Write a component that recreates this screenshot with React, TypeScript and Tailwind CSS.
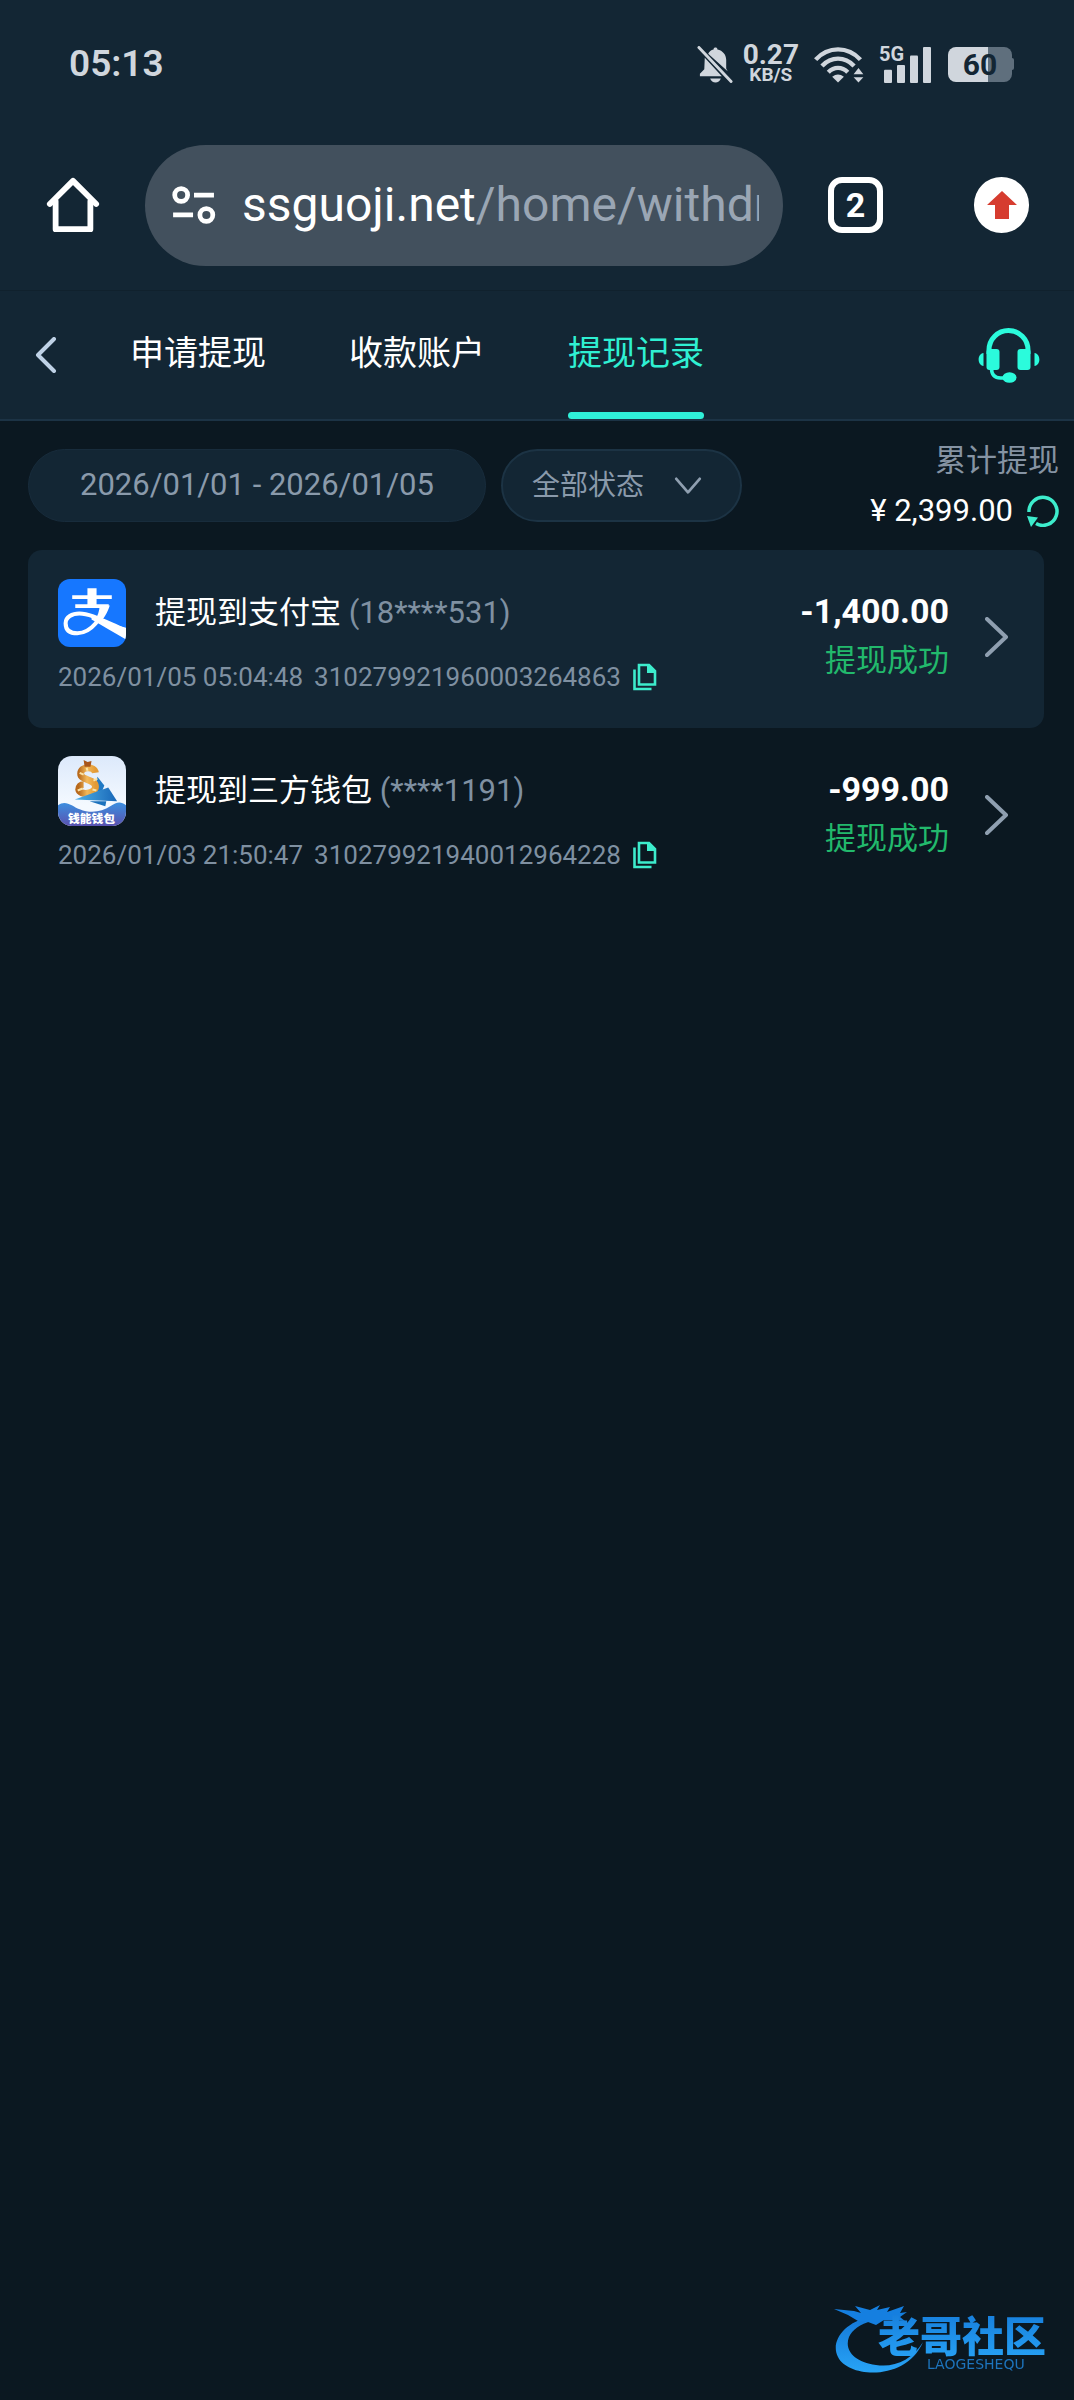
import React, { useState } from 'react';

type WithdrawRecord = {
  id: string;
  title: string;
  account: string;
  time: string;
  amount: string;
  status: string;
  logo: React.ReactNode;
};

const AlipayLogo = () => (
  <svg className="h-[68px] w-[68px] rounded-[12px]" viewBox="0 0 67 67" aria-label="支付宝">
    <rect width="67" height="67" fill="#1677ff" />
    <path d="M29 9h9v18h-9z M14 16h39v3.6H14z M17 25h33v3.6H17z" fill="#fff" />
    <path
      d="M46 27C43 37 34 53 19 53.500C10 53.500 7.500 49 7.500 43.500C7.500 37.500 14 34 21 34C32 34 44 41 67 51"
      fill="none"
      stroke="#fff"
      strokeWidth="4"
    />
    <path d="M41 26h10c-2 7-6 13-10 17l-5-2c3-4 5-10 5-15z" fill="#fff" />
    <path d="M33 36.500C43 41 54 45 67 48v11.500C55 53 44 46 33 40z" fill="#fff" />
  </svg>
);

const WalletLogo = () => (
  <svg className="h-[70px] w-[68px] rounded-[14px]" viewBox="0 0 69 71" aria-label="钱能钱包">
    <defs>
      <linearGradient id="wSky" x1="0" y1="0" x2="0" y2="1">
        <stop offset="0" stopColor="#dce9fb" />
        <stop offset="0.7" stopColor="#f4f9ff" />
      </linearGradient>
      <linearGradient id="wSea" x1="0" y1="0" x2="0" y2="1">
        <stop offset="0" stopColor="#3b8fe0" />
        <stop offset="1" stopColor="#5a52b0" />
      </linearGradient>
      <linearGradient id="wGold" x1="0" y1="0" x2="1" y2="0">
        <stop offset="0" stopColor="#b8691c" />
        <stop offset="0.5" stopColor="#f3b95a" />
        <stop offset="1" stopColor="#e39a35" />
      </linearGradient>
      <linearGradient id="wSail" x1="0" y1="0" x2="1" y2="0">
        <stop offset="0" stopColor="#4fb0e6" />
        <stop offset="1" stopColor="#1867b8" />
      </linearGradient>
    </defs>
    <rect width="69" height="71" fill="url(#wSky)" />
    <path d="M40 21l7 9-2 5-8 2z" fill="#2079c4" />
    <path
      d="M38 17C37 10 23 10 23 18C23 25 38 23 38 31C38 39 22 40 21 34C21 31 23 29 26 29"
      fill="none"
      stroke="url(#wGold)"
      strokeWidth="7"
    />
    <path d="M26 4l4 2 4-1-1 6h-6z" fill="#a8551b" />
    <path d="M22 17l4 2M36 25l4-2M20 35l5-2M35 34l4 1M29 12l1 3" stroke="#fbe3a6" strokeWidth="2" />
    <path d="M17 44L51 32L60 46z" fill="url(#wSail)" />
    <path d="M32 46h17l-1 5z" fill="#1c72bd" />
    <path d="M0 50C8 44 14 51 22 54C34 59 45 56 53 51C60 46 64 46 69 50V71H0z" fill="url(#wSea)" />
    <text
      x="34"
      y="68"
      textAnchor="middle"
      fill="#fff"
      className="font-['Noto_Sans_CJK_SC',sans-serif] text-[12px] font-black"
    >
      钱能钱包
    </text>
  </svg>
);

const records: WithdrawRecord[] = [
  {
    id: '310279921960003264863',
    title: '提现到支付宝',
    account: '(18****531)',
    time: '2026/01/05 05:04:48',
    amount: '-1,400.00',
    status: '提现成功',
    logo: <AlipayLogo />,
  },
  {
    id: '310279921940012964228',
    title: '提现到三方钱包',
    account: '(****1191)',
    time: '2026/01/03 21:50:47',
    amount: '-999.00',
    status: '提现成功',
    logo: <WalletLogo />,
  },
];

const tabs = ['申请提现', '收款账户', '提现记录'];

const StatusBar = () => (
  <div className="flex h-32 items-center justify-between pr-[60px] pl-[69px] text-[#d0d6dd]">
    <span className="text-[37px] font-semibold">05:13</span>
    <div className="flex items-center">
      <svg className="h-[37px] w-9" viewBox="0 0 36 38" fill="currentColor">
        <path d="M11 8C12 5.500 14 4 16.500 3.500C16.500 1 20.500 1 20.500 3.500C26 4.500 29.500 9 29.500 14V23L31 26z" />
        <path d="M7.500 12L25 31H2.500V28.500L7 24z" />
        <path d="M13 33.500h11c-1 3-3 4-5.500 4s-4.500-1-5.500-4z" />
        <path d="M1.500 1.500L34.500 36.500" stroke="currentColor" strokeWidth="3" strokeLinecap="round" />
      </svg>
      <div className="ml-[10px] flex flex-col items-center font-bold">
        <span className="text-[28px] leading-[22px]">0.27</span>
        <span className="text-[19px] leading-[18px]">KB/S</span>
      </div>
      <svg className="ml-[14px] h-[37px] w-[52px]" viewBox="0 0 52 38" fill="none" stroke="currentColor" strokeWidth="4.500">
        <path d="M2 14C15 0 35 0 48 14" />
        <path d="M8.500 20.500C18 10.500 32 10.500 41.500 20.500" />
        <path d="M15 27C21 21 29 21 35 27" />
        <path d="M19 31.500Q25 27 31 31.500L25 37.500z" fill="currentColor" stroke="none" />
        <path d="M46 22.500l5 6.500H41zM46 37.500l5-5.500H41z" fill="currentColor" stroke="none" />
      </svg>
      <div className="relative ml-[14px] h-[37px] w-[53px]">
        <span className="absolute top-0 left-0 text-[20px] leading-[16px] font-bold">5G</span>
        <svg className="h-full w-full" viewBox="0 0 53 39" fill="currentColor" preserveAspectRatio="none">
          <rect x="5" y="25" width="8" height="14" rx="1" />
          <rect x="18" y="20" width="8" height="19" rx="1" />
          <rect x="31" y="10" width="8" height="29" rx="1" />
          <rect x="44" y="1" width="8" height="38" rx="1" />
        </svg>
      </div>
      <div className="ml-4 flex items-center">
        <div className="flex h-[35px] w-16 items-center justify-center rounded-[8px] bg-linear-to-r from-[#d0d6dd] from-63% to-[#5f6f7d] to-63% text-[30px] font-bold text-[#132634]">
          60
        </div>
        <div className="h-3 w-[2px] rounded-r bg-[#5f6f7d]" />
      </div>
    </div>
  </div>
);

const BrowserBar = () => (
  <div className="flex h-[162px] items-center px-[45px] pb-2">
    <button aria-label="主页" className="shrink-0">
      <svg className="h-14 w-14" viewBox="0 0 56 58" fill="none" stroke="#fff" strokeWidth="6" strokeLinecap="round" strokeLinejoin="round">
        <path d="M4 28L28 4L52 28" />
        <path d="M10 25V54H46V25" />
      </svg>
    </button>
    <div className="ml-11 flex h-[121px] min-w-0 flex-1 items-center rounded-full bg-[#42505d] pr-6 pl-[26px]">
      <svg className="h-[38px] w-[46px] shrink-0" viewBox="0 0 46 40" fill="none" stroke="#fff" strokeWidth="5">
        <circle cx="9.500" cy="9.500" r="6.800" />
        <path d="M23 9.500H44M1 30.500H22" />
        <circle cx="36" cy="30.500" r="6.800" />
      </svg>
      <a href="#" className="ml-[25px] block flex-1 overflow-hidden text-[48px] leading-[64px] whitespace-nowrap text-[#9aa6b4]">
        <span className="text-white">ssguoji.net</span>/home/withdraw
      </a>
    </div>
    <button className="ml-[45px] flex h-14 w-[55px] shrink-0 items-center justify-center rounded-[14px] border-[6px] border-white text-[34px] font-bold text-white">
      2
    </button>
    <button aria-label="更新" className="ml-[91px] flex h-14 w-[55px] shrink-0 items-center justify-center rounded-full bg-white">
      <svg className="h-7 w-[30px]" viewBox="0 0 30 28" fill="#d63c2f">
        <path d="M15 0L30 14H22V28H8V14H0z" />
      </svg>
    </button>
  </div>
);

const Watermark = () => (
  <svg className="fixed right-4 bottom-6 h-[72px] w-[224px]" viewBox="0 0 224 72">
    <defs>
      <linearGradient id="wm" x1="0" y1="0" x2="0" y2="1">
        <stop offset="0" stopColor="#1478d8" />
        <stop offset="1" stopColor="#28a4f6" />
      </linearGradient>
    </defs>
    <path
      d="M36 13C10 18 -4 38 4 53C14 74 72 78 89 38C78 56 60 64 42 61C20 58 10 46 15 33C18 26 26 20 38 17z"
      fill="url(#wm)"
    />
    <path
      d="M0 5L20 7L27 9L21 2L36 6L46 1L43 6L56 3L53 8L70 2L66 9L73 8L66 13L71 17L58 16L50 16L42 21L34 18L24 17L14 11z"
      fill="#157fe0"
    />
    <text x="44" y="48" fill="url(#wm)" className="font-['Noto_Sans_CJK_SC',sans-serif] text-[42px] font-black">
      老哥社区
    </text>
    <text x="93" y="65" fill="#1d74bd" className="font-['DejaVu_Sans',sans-serif] text-[14px]">
      LAOGESHEQU
    </text>
  </svg>
);

const App: React.FC = () => {
  const [active, setActive] = useState('提现记录');
  const [status, setStatus] = useState('all');

  return (
    <div className="min-h-screen bg-[#0b1821] font-[Roboto,'Noto_Sans_CJK_SC',sans-serif]">
      <header className="bg-[#132634]">
        <StatusBar />
        <BrowserBar />
        <div className="flex h-[131px] items-center justify-between border-t border-b-2 border-t-[#10212d] border-b-[#1c3345] pr-[34px] pl-[34px]">
          <div className="flex h-full items-center">
            <button aria-label="返回">
              <svg className="h-9 w-6" viewBox="0 0 24 36" fill="none" stroke="#bfd2e6" strokeWidth="4" strokeLinecap="round" strokeLinejoin="round">
                <path d="M20 2L4 18L20 34" />
              </svg>
            </button>
            <nav className="ml-[72px] flex h-full gap-[83px]">
              {tabs.map((tab) => (
                <button
                  key={tab}
                  onClick={() => setActive(tab)}
                  className={`relative h-full pb-1 text-[34px] ${tab === active ? 'text-[#2ff0d2]' : 'text-white'}`}
                >
                  {tab}
                  {tab === active && <span className="absolute inset-x-0 bottom-0 h-[7px] rounded-full bg-[#2ff0d8]" />}
                </button>
              ))}
            </nav>
          </div>
          <button aria-label="客服">
            <svg className="h-[55px] w-[62px]" viewBox="0 0 61 55" fill="#2bfbdc">
              <path d="M10.500 26V22A19.500 19.500 0 0 1 49.500 22V26" fill="none" stroke="#2bfbdc" strokeWidth="5" />
              <rect x="8" y="21" width="13" height="21" rx="3" />
              <rect x="39" y="21" width="13" height="21" rx="3" />
              <path d="M5 25V38C-1.500 37 -1.500 26 5 25zM56 25V38C62.500 37 62.500 26 56 25z" />
              <path d="M13 40C13 47 16 50 22 50H28" fill="none" stroke="#2bfbdc" strokeWidth="3.500" />
              <ellipse cx="31" cy="49.500" rx="7" ry="5.300" />
            </svg>
          </button>
        </div>
      </header>

      <main>
        <div className="flex h-[129px] items-center pr-[15px] pl-7">
          <button className="h-[73px] rounded-full border border-[#182c3c] bg-[#132634] px-[51px] text-[31px] text-[#8a9aab]">
            2026/01/01 - 2026/01/05
          </button>
          <div className="relative ml-[15px]">
            <select
              aria-label="状态"
              value={status}
              onChange={(e) => setStatus(e.target.value)}
              className="block h-[73px] w-[241px] appearance-none rounded-full border-2 border-[#1c3344] bg-[#132634] pl-[29px] text-[28px] text-[#8a9aab]"
            >
              <option value="all">全部状态</option>
              <option value="success">提现成功</option>
            </select>
            <svg className="pointer-events-none absolute top-7 right-[39px] h-[18px] w-[30px]" viewBox="0 0 30 20" fill="none" stroke="#8f9fb0" strokeWidth="3" strokeLinecap="round" strokeLinejoin="round">
              <path d="M2 2L15 17L28 2" />
            </svg>
          </div>
          <div className="ml-auto text-right leading-[50px]">
            <p className="text-[31px] text-[#8593a3]">累计提现</p>
            <div className="flex items-center justify-end gap-[14px] text-[31px] text-white">
              <span>¥ 2,399.00</span>
              <button aria-label="刷新">
                <svg className="h-8 w-8" viewBox="0 0 32 32" fill="none">
                  <path d="M2 17A14 14 0 1 1 9 28.500" stroke="#3deccc" strokeWidth="3.500" />
                  <path d="M0 21L11 22.500L4 32z" fill="#3deccc" />
                </svg>
              </button>
            </div>
          </div>
        </div>

        <ul className="mr-[30px] ml-7">
          {records.map((r) => (
            <li key={r.id} className="flex h-[178px] items-start rounded-[14px] pt-7 pr-[35px] pl-[30px] odd:bg-[#132634]">
              <div className="flex-1">
                <div className="flex h-[70px] items-center">
                  {r.logo}
                  <p className="ml-[29px] text-[31px] text-white">
                    {r.title} <span className="text-[#7f90a1]">{r.account}</span>
                  </p>
                </div>
                <div className="mt-[14px] flex items-center text-[26px] leading-[30px] text-[#7f90a1]">
                  <span>{r.time}</span>
                  <span className="ml-[11px]">{r.id}</span>
                  <button aria-label="复制" className="ml-3">
                    <svg className="h-7 w-6" viewBox="0 0 24 28" fill="none" stroke="#3deccc" strokeWidth="2.600">
                      <path d="M6 2H16L22 8V21.500H6z" />
                      <path d="M14.500 2V9.500H22z" fill="#3deccc" stroke="none" />
                      <path d="M14 1L23 10H14z" fill="#3deccc" stroke="none" />
                      <path d="M1.500 6.500V26H18.500" />
                    </svg>
                  </button>
                </div>
              </div>
              <div className="pt-2 text-right leading-[50px]">
                <p className="text-[34px] font-bold text-white">{r.amount}</p>
                <p className="text-[31px] text-[#22b96c]">{r.status}</p>
              </div>
              <button aria-label="详情" className="ml-9 self-stretch pb-8">
                <svg className="h-10 w-6" viewBox="0 0 24 40" fill="none" stroke="#8f9fb0" strokeWidth="4" strokeLinecap="round" strokeLinejoin="round">
                  <path d="M2 2L21 20L2 38" />
                </svg>
              </button>
            </li>
          ))}
        </ul>
      </main>

      <Watermark />
    </div>
  );
};

export default App;
